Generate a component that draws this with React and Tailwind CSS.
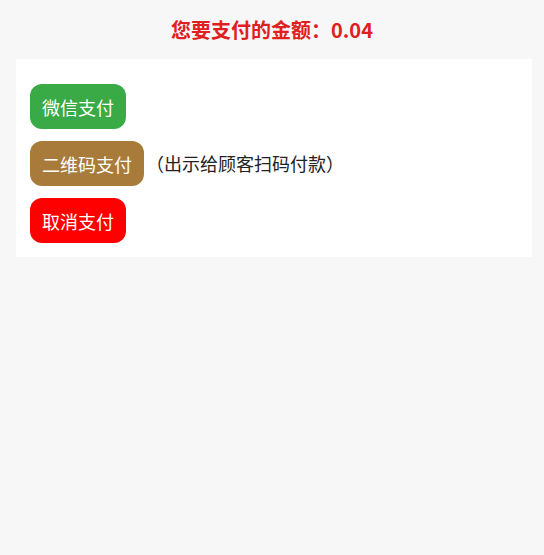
import React from "react";

const font = { fontFamily: '"Noto Sans CJK SC", "Noto Sans", sans-serif' };

const PayButton = ({ label, className }) => (
  <button
    className={`h-[45px] px-[12px] rounded-[12px] text-[18px] leading-none text-white ${className}`}
  >
    {label}
  </button>
);

export default function App() {
  return (
    <div className="min-h-[555px] w-full bg-[#f7f7f7]" style={font}>
      {/* 金额 */}
      <div className="pt-[16px] pb-[15px] text-center text-[20px] leading-[28px] font-bold text-[#e0201f]">
        您要支付的金额：0.04
      </div>

      {/* 支付方式 */}
      <div className="ml-[16px] mr-[12px] bg-white pt-[25px] pb-[14px] pl-[14px] flex flex-col gap-[12px]">
        <div className="flex items-center">
          <PayButton label="微信支付" className="bg-[#3aaa46]" />
        </div>
        <div className="flex items-center">
          <PayButton label="二维码支付" className="bg-[#a87b3a]" />
          <span className="ml-[2px] text-[18px] text-[#222]">（出示给顾客扫码付款）</span>
        </div>
        <div className="flex items-center">
          <PayButton label="取消支付" className="bg-[#ff0000]" />
        </div>
      </div>
    </div>
  );
}
